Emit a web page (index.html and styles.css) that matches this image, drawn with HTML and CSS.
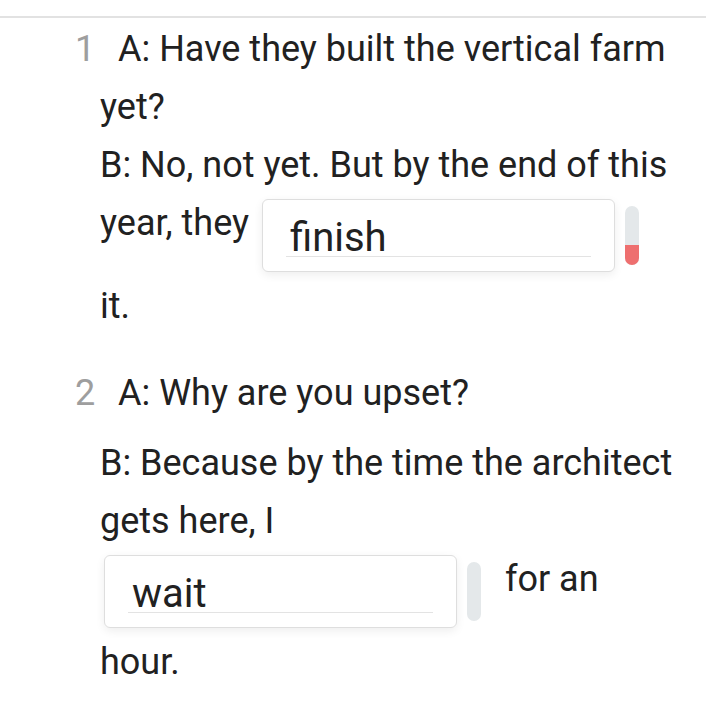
FILE: index.html
```html
<!DOCTYPE html>
<html lang="en">
<head>
  <meta charset="UTF-8" />
  <title>Future perfect exercise</title>
  <link rel="stylesheet" href="styles.css">
</head>
<body>
  <!-- Exercise list -->
  <div class="exercise">

    <div class="item">
      <div class="line"><span class="num">1</span>A: Have they built the vertical farm yet?</div>
      <div class="line">B: No, not yet. But by the end of this year, they <span class="answer"><span class="box"><span class="box-text">finish</span></span><span class="meter"><span class="meter-fill fill-low"></span></span></span> it.</div>
    </div>

    <div class="item">
      <div class="line line-a"><span class="num">2</span>A: Why are you upset?</div>
      <div class="line">B: Because by the time the architect gets here, I <span class="answer"><span class="box"><span class="box-text">wait</span></span><span class="meter"></span></span> for an hour.</div>
    </div>

  </div>
</body>
</html>
```

FILE: styles.css
```css
/* ---- Global ---- */
html, body {
  margin: 0;
  padding: 0;
  background: #ffffff;
  font-family: Roboto, "Noto Sans", sans-serif;
  color: #212121;
}

/* ---- Exercise list ---- */
.exercise {
  margin-top: 16px;
  border-top: 2px solid #e2e2e2;
  padding-top: 2px;
}

.item {
  padding: 0 32px 0 100px;
  font-size: 36px;
  line-height: 58px;
}
.item + .item {
  margin-top: 29px;
}

.line-a {
  margin-bottom: 12px;
}

.num {
  display: inline-block;
  width: 43px;
  margin-left: -25px;
  color: #9e9e9e;
}

/* ---- Answer box + meter ---- */
.answer {
  display: inline-flex;
  align-items: center;
  gap: 10px;
  margin: 0 15px 5px 4px;
  vertical-align: -16px;
}

.box {
  display: block;
  width: 305px;
  padding: 14px 23px 10px;
  background: #ffffff;
  border: 1px solid #dedede;
  border-radius: 6px;
  box-shadow: 0 3px 10px rgba(0, 0, 0, 0.07);
}
.box-text {
  display: block;
  font-size: 40px;
  line-height: 47px;
  padding-left: 4px;
  /* thin rule just under the typed word */
  background: linear-gradient(#e3e3e3, #e3e3e3) left 42px / 100% 1px no-repeat;
}

.meter {
  display: flex;
  flex-direction: column;
  justify-content: flex-end;
  width: 14px;
  height: 59px;
  border-radius: 7px;
  background: #e4e8ea;
  overflow: hidden;
}
.meter-fill {
  display: block;
  background: #ee6f6f;
}
.fill-low {
  height: 20px;
}
```
